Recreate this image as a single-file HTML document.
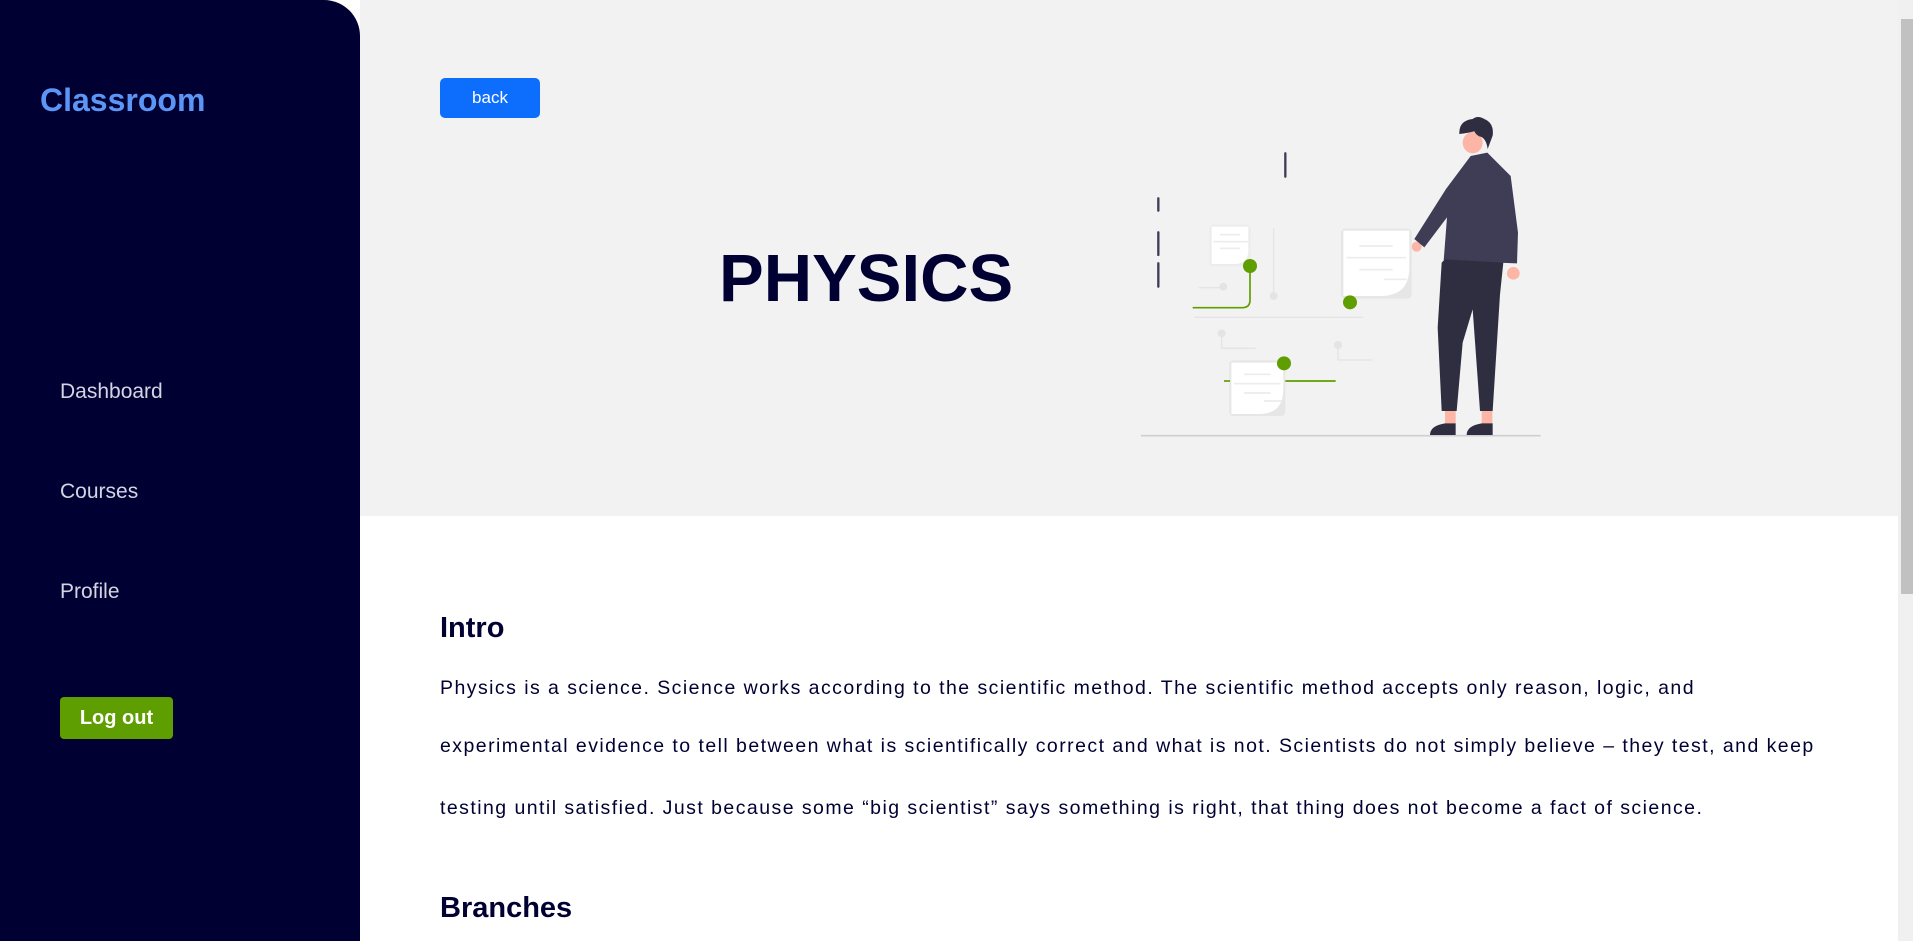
<!DOCTYPE html>
<html><head><meta charset="utf-8"><style>
*{margin:0;padding:0;box-sizing:border-box}
body{width:1913px;height:941px;overflow:hidden;background:#fff;font-family:"Liberation Sans",sans-serif;position:relative}
.side{position:absolute;left:0;top:0;width:360px;height:941px;background:#000033;border-top-right-radius:36px}
.logo{position:absolute;left:40px;top:82px;font-size:32px;font-weight:bold;color:#5b96f7}
.nav{position:absolute;left:60px;font-size:21px;color:#d4d4e4}
.logout{position:absolute;left:60px;top:697px;width:113px;height:42px;background:#5f9e00;border-radius:4px;color:#fff;font-weight:bold;font-size:20px;text-align:center;line-height:42px}
.hero{position:absolute;left:360px;top:0;width:1538px;height:516px;background:#f2f2f2}
.back{position:absolute;left:440px;top:78px;width:100px;height:40px;background:#0d6efd;border-radius:5px;color:#fff;font-size:17px;text-align:center;line-height:40px}
.title{position:absolute;left:719px;top:240px;font-size:67px;font-weight:bold;color:#000033}
h2{position:absolute;left:440px;font-size:29px;font-weight:bold;color:#000033}
.p{position:absolute;left:440px;font-size:19.5px;color:#000033;letter-spacing:1.45px;white-space:nowrap}
.sb{position:absolute;left:1898px;top:0;width:15px;height:941px;background:#f0f0f0}
.th{position:absolute;left:1901px;top:19px;width:12px;height:575px;background:#c1c1c1}
</style></head><body>
<div class="side">
<div class="logo">Classroom</div>
<div class="nav" style="top:380px">Dashboard</div>
<div class="nav" style="top:480px">Courses</div>
<div class="nav" style="top:580px">Profile</div>
<div class="logout">Log out</div>
</div>
<div class="hero"></div>
<div class="back">back</div>
<div class="title">PHYSICS</div>
<svg style="position:absolute;left:1120px;top:100px" width="450" height="350" viewBox="0 0 1350 1050">
<line x1="63" y1="1007" x2="1262" y2="1007" stroke="#cfcfcf" stroke-width="5"/>
<g stroke="#3f3d56" stroke-width="7" stroke-linecap="round">
<line x1="496" y1="160" x2="496" y2="230"/><line x1="115" y1="295" x2="115" y2="332"/><line x1="115" y1="397" x2="115" y2="465"/><line x1="115" y1="490" x2="115" y2="560"/></g>
<g stroke="#e4e4e4" stroke-width="4" fill="none">
<line x1="461" y1="385" x2="461" y2="585"/><line x1="236" y1="563" x2="305" y2="563"/><line x1="222" y1="652" x2="730" y2="652"/>
<polyline points="305,700 305,745 407,745"/><polyline points="654,735 654,780 757,780"/></g>
<g fill="#e4e4e4"><circle cx="461" cy="588" r="12"/><circle cx="310" cy="560" r="12"/><circle cx="305" cy="700" r="12"/><circle cx="654" cy="735" r="12"/></g>
<rect x="268" y="374" width="124" height="124" rx="12" fill="#ececec"/>
<path d="M275 380h110v70q0 42-42 42h-68z" fill="#fff"/>
<rect x="663" y="386" width="212" height="210" rx="12" fill="#e6e6e6"/>
<path d="M670 392h198v110q0 86-86 86h-112z" fill="#fff"/>
<rect x="328" y="781" width="168" height="167" rx="12" fill="#e6e6e6"/>
<path d="M334 788h156v80q0 74-74 74h-82z" fill="#fff"/>
<g stroke="#ececec" stroke-width="5"><line x1="300" y1="404" x2="360" y2="404"/><line x1="280" y1="425" x2="385" y2="425"/><line x1="300" y1="445" x2="360" y2="445"/>
<line x1="718" y1="438" x2="818" y2="438"/><line x1="680" y1="473" x2="858" y2="473"/><line x1="718" y1="509" x2="818" y2="509"/><line x1="792" y1="538" x2="860" y2="538"/>
<line x1="372" y1="823" x2="452" y2="823"/><line x1="342" y1="851" x2="482" y2="851"/><line x1="372" y1="879" x2="452" y2="879"/><line x1="432" y1="903" x2="484" y2="903"/></g>
<g stroke="#5f9e00" stroke-width="5" fill="none"><path d="M390 500v100q0 23-23 23H218"/><line x1="312" y1="843" x2="330" y2="843"/><line x1="496" y1="843" x2="647" y2="843"/></g>
<g fill="#5f9e00"><circle cx="390" cy="498" r="21"/><circle cx="690" cy="607" r="21"/><circle cx="492" cy="790" r="21"/></g>
<g fill="#fdb5a6"><circle cx="890" cy="440" r="15"/><circle cx="1180" cy="520" r="19"/><rect x="975" y="920" width="32" height="55"/><rect x="1085" y="920" width="32" height="55"/><ellipse cx="1058" cy="128" rx="30" ry="32"/></g>
<path d="M1018 102q-2-40 40-45q15-12 35 0q30 12 25 50l-15 40q-5-35-25-38q-10-5-15-15q-20 5-45 8z" fill="#2f2e41"/>
<path d="M1052 168l50-10 70 70 22 170-3 92-220-8 10-130-68 90-30-25 95-150z" fill="#3f3d56"/>
<path d="M975 478l175 10-10 95-22 350h-38l-22-305-30 100-18 205h-45l-12-250 12-195z" fill="#2f2e41"/>
<path d="M930 1005q0-28 45-35h32v35z" fill="#2f2e41"/><path d="M1040 1005q0-28 45-35h33v35z" fill="#2f2e41"/>
</svg>
<h2 style="top:612px">Intro</h2>
<div class="p" style="top:677px">Physics is a science. Science works according to the scientific method. The scientific method accepts only reason, logic, and</div>
<div class="p" style="top:735px">experimental evidence to tell between what is scientifically correct and what is not. Scientists do not simply believe – they test, and keep</div>
<div class="p" style="top:797px">testing until satisfied. Just because some “big scientist” says something is right, that thing does not become a fact of science.</div>
<h2 style="top:892px">Branches</h2>
<div class="sb"></div><div class="th"></div>
</body></html>
